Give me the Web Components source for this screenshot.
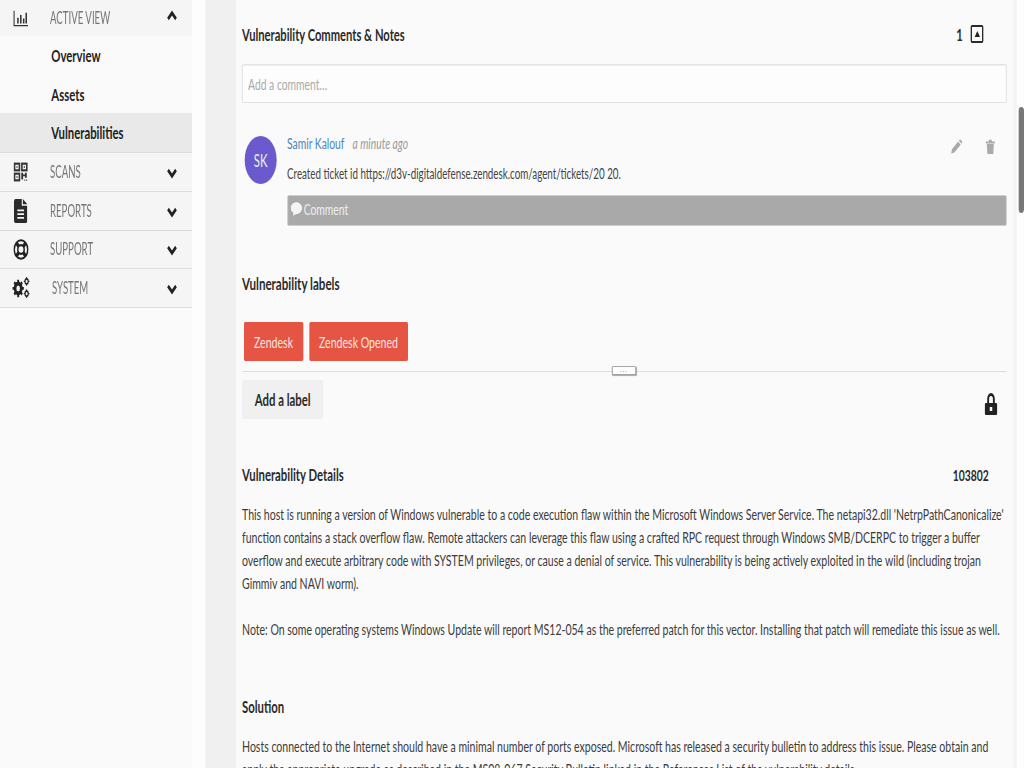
<!DOCTYPE html>
<html>
<head>
<meta charset="utf-8">
<title>Vulnerability</title>
<style>
  html, body { margin: 0; height: 768px; overflow: hidden; background: #fdfdfd; }
  body { font-family: Lato, "Open Sans", sans-serif; color: #333; }
</style>
</head>
<body>
<app-shell>
  <side-nav slot="nav">
    <nav-row icon="chart" open style="height:36px">ACTIVE VIEW</nav-row>
    <sub-row>Overview</sub-row>
    <sub-row>Assets</sub-row>
    <sub-row active>Vulnerabilities</sub-row>
    <nav-row icon="qr">SCANS</nav-row>
    <nav-row icon="file">REPORTS</nav-row>
    <nav-row icon="help">SUPPORT</nav-row>
    <nav-row icon="cogs" shift>SYSTEM</nav-row>
  </side-nav>

  <comment-box></comment-box>

  <comment-item initials="SK" author="Samir Kalouf" when="a minute ago">
    Created ticket id https://d3v-digitaldefense.zendesk.com/agent/tickets/20 20.
  </comment-item>

  <label-box></label-box>

  <detail-block title-text="Vulnerability Details" code="103802">
    <p>This host is running a version of Windows vulnerable to a code execution flaw within the Microsoft Windows Server Service. The netapi32.dll 'NetrpPathCanonicalize'<br>function contains a stack overflow flaw. Remote attackers can leverage this flaw using a crafted RPC request through Windows SMB/DCERPC to trigger a buffer<br>overflow and execute arbitrary code with SYSTEM privileges, or cause a denial of service. This vulnerability is being actively exploited in the wild (including trojan<br>Gimmiv and NAVI worm).<br><br>Note: On some operating systems Windows Update will report MS12-054 as the preferred patch for this vector. Installing that patch will remediate this issue as well.</p>
  </detail-block>

  <detail-block title-text="Solution" style="margin-top:57px">
    <p>Hosts connected to the Internet should have a minimal number of ports exposed. Microsoft has released a security bulletin to address this issue. Please obtain and<br>apply the appropriate upgrade as described in the MS08-067 Security Bulletin linked in the References List of the vulnerability details.</p>
  </detail-block>
</app-shell>

<script>
// the reference is squeezed horizontally, so everything is laid out at 1536 wide and scaled to 1024
const ICONS = {
  chart: `<svg viewBox="0 0 24 24" width="23" height="17" preserveAspectRatio="none"><path d="M1 1v21h22" fill="none" stroke="#333" stroke-width="2"/><path d="M6 11h2.400v8H6zM10.500 7h2.400v12h-2.400zM15 12h2.400v7H15zM19 4h2.400v15H19z" fill="#333"/></svg>`,
  qr: `<svg viewBox="0 0 24 24" width="22" height="20" preserveAspectRatio="none"><g fill="none" stroke="#333" stroke-width="2.600"><rect x="2" y="2" width="8" height="8"/><rect x="14" y="2" width="8" height="8"/><rect x="2" y="14" width="8" height="8"/></g><path d="M5 5h2v2H5zM17 5h2v2h-2zM5 17h2v2H5z" fill="#333"/><path d="M13 13h3v2h3v-2h3v6h-3v-2h-3v4h-3zM18 21h1.600v1.600H18zM21 21h1.600v1.600H21z" fill="#333"/></svg>`,
  file: `<svg viewBox="0 0 24 32" width="20" height="24" preserveAspectRatio="none"><path d="M3 0h11v9h10v20a3 3 0 0 1-3 3H3a3 3 0 0 1-3-3V3a3 3 0 0 1 3-3zM16 0l8 7h-8z" fill="#2b2b2b"/><path d="M6 14h12v2.400H6zM6 19h12v2.400H6zM6 24h12v2.400H6z" fill="#f5f5f5"/></svg>`,
  help: `<svg viewBox="0 0 24 24" width="23" height="21" preserveAspectRatio="none"><circle cx="12" cy="12" r="10.600" fill="none" stroke="#222" stroke-width="2.400"/><circle cx="12" cy="12" r="5" fill="none" stroke="#222" stroke-width="2.400"/><path d="M4.500 4.500l4 4M19.500 4.500l-4 4M4.500 19.500l4-4M19.500 19.500l-4-4" stroke="#222" stroke-width="4.600"/></svg>`,
  cogs: `<svg viewBox="0 0 32 24" width="27" height="21" preserveAspectRatio="none"><g fill="none" stroke="#222"><circle cx="11" cy="13" r="5.500" stroke-width="4.600"/><path d="M11 3v4M11 19v4M1 13h4M17 13h4M4 6l3 3M18 6l-3 3M4 20l3-3M18 20l-3-3" stroke-width="3.400"/><circle cx="26" cy="5" r="2.800" stroke-width="2"/><path d="M26 0v2M26 8v2M21 5h2M29 5h2" stroke-width="1.600"/><circle cx="26" cy="19" r="2.800" stroke-width="2"/><path d="M26 14v2M26 22v2M21 19h2M29 19h2" stroke-width="1.600"/></g></svg>`
};

class AppShell extends HTMLElement {
  constructor() {
    super();
    this.attachShadow({ mode: 'open' }).innerHTML = `
      <style>
        :host {
          display: grid;
          grid-template-columns: 288px 20px 46px 1fr;
          width: 1536px;
          height: 768px;
          overflow: hidden;
          transform: scaleX(.66667);
          transform-origin: 0 0;
          position: relative;
          filter: blur(.35px);
        }
        .gutter { background: #f0f0f0; }
        .content { background: #fafafa; padding: 0 10.500px 0 9px; border-right: 5px solid #f3f3f3; margin-right: 11px; overflow: hidden; min-width: 0; }
        .thumb { position: absolute; right: 0; top: 107px; width: 8px; height: 106px; border-radius: 4px; background: #777; }
      </style>
      <slot name="nav"></slot>
      <div></div>
      <div class="gutter"></div>
      <div class="content"><slot></slot></div>
      <div class="thumb"></div>`;
  }
}

class SideNav extends HTMLElement {
  constructor() {
    super();
    this.attachShadow({ mode: 'open' }).innerHTML = `
      <style>:host { display: flex; flex-direction: column; background: #fafafa; }</style><slot></slot>`;
  }
}

class NavRow extends HTMLElement {
  constructor() {
    super();
    const open = this.hasAttribute('open');
    const chev = open ? 'M3 11l6-6 6 6' : 'M3 5l6 6 6-6';
    this.attachShadow({ mode: 'open' }).innerHTML = `
      <style>
        :host { display: flex; align-items: center; box-sizing: border-box; height: 38.600px; background: #f5f5f5; border-bottom: 1.500px solid #ddd; flex: none; }
        :host([open]) { border-bottom: 0; }
        .ico { width: 62px; display: flex; justify-content: center; flex: none; }
        .txt { flex: 1; font-size: 17px; color: #757575; padding-left: 13px; margin-top: -1px; }
        .txt span { display: inline-block; transform: scaleX(.85); transform-origin: 0 50%; white-space: nowrap; }
        .chev { margin-right: 20.500px; display: flex; position: relative; top: ${open ? '-2px' : '1px'}; }
      </style>
      <div class="ico">${ICONS[this.getAttribute('icon')]}</div>
      <div class="txt" style="${this.hasAttribute('shift') ? 'padding-left:16px' : ''}"><span><slot></slot></span></div>
      <div class="chev"><svg width="20" height="16" viewBox="0 0 18 16"><path d="${chev}" fill="none" stroke="#222" stroke-width="3.500"/></svg></div>`;
  }
}

class SubRow extends HTMLElement {
  constructor() {
    super();
    this.attachShadow({ mode: 'open' }).innerHTML = `
      <style>
        :host { display: flex; align-items: center; height: 38.700px; padding-left: 77px; font-size: 17px; font-weight: 700; color: #222; flex: none; }
        :host([active]) { background: #e9e9e9; border-radius: 2px 2px 0 0; border-bottom: 1.500px solid #ddd; height: 39px; }
      </style><slot></slot>`;
  }
}

class CommentBox extends HTMLElement {
  constructor() {
    super();
    this.attachShadow({ mode: 'open' }).innerHTML = `
      <style>
        :host { display: block; padding-top: 24px; }
        .head { display: flex; align-items: center; justify-content: space-between; height: 20px; font-size: 16.800px; font-weight: 700; color: #2b2b2b; }
        .count { display: flex; align-items: center; gap: 12px; margin-right: 34.500px; }
        .up { box-sizing: border-box; width: 19px; height: 18px; border: 2px solid #2b2b2b; border-radius: 2px; display: flex; align-items: center; justify-content: center; }
        .up i { width: 0; height: 0; border: 4.500px solid transparent; border-bottom: 6px solid #222; border-top: 0; }
        .input { box-sizing: border-box; margin-top: 20px; height: 39px; border: 1.500px solid #ddd; border-radius: 2px; background: #fdfdfd; display: flex; align-items: center; padding-left: 8px; font-size: 15.500px; color: #aaa; box-shadow: inset 0 1px 1px #eee; }
      </style>
      <div class="head"><span>Vulnerability Comments &amp; Notes</span><span class="count">1 <span class="up"><i></i></span></span></div>
      <div class="input">Add a comment&hellip;</div>`;
  }
}

class CommentItem extends HTMLElement {
  constructor() {
    super();
    this.attachShadow({ mode: 'open' }).innerHTML = `
      <style>
        :host { display: grid; grid-template-columns: 63.500px 1fr; padding: 33px 0 0 4px; font-size: 15.500px; }
        .avatar { width: 48px; height: 48px; border-radius: 50%; background: #6a5acd; color: #eee; display: flex; align-items: center; justify-content: center; font-size: 17px; }
        .top { display: flex; align-items: center; height: 13px; gap: 12px; }
        .name { color: #4a86bd; }
        .when { color: #999; font-style: italic; }
        .tools { margin-left: auto; display: flex; gap: 34px; margin-right: 16.500px; margin-top: 7px; }
        .msg { margin-top: 14px; height: 21px; line-height: 21px; font-size: 14.700px; color: #444; white-space: nowrap; }
        .bar { box-sizing: border-box; margin-top: 11px; height: 30.500px; background: #a9a9a9; border-radius: 2px; border: 1px solid #ccc; display: flex; align-items: center; gap: 3px; padding: 0 0 2px 4px; color: #eee; }
      </style>
      <div class="avatar">${this.getAttribute('initials')}</div>
      <div>
        <div class="top">
          <span class="name">${this.getAttribute('author')}</span>
          <span class="when">${this.getAttribute('when')}</span>
          <span class="tools">
            <svg width="18" height="15" viewBox="0 0 24 24" preserveAspectRatio="none"><path d="M1 23l1.500-6.500L15 4l5 5L7.500 21.500z M16.500 2.500l1.500-1.500q1-1 2 0l3 3q1 1 0 2L21.500 7.500z" fill="#aaa"/></svg>
            <svg width="15" height="15" viewBox="0 0 20 24" preserveAspectRatio="none"><path d="M1 4h18v3H1zM7 1h6v3H7zM3 8h14l-1 16H4z" fill="#aaa"/></svg>
          </span>
        </div>
        <div class="msg"><slot></slot></div>
        <div class="bar"><svg width="17" height="14" viewBox="0 0 20 16"><path d="M10 0c5.500 0 10 3 10 7s-4.500 7-10 7l-6 2 1-3.500C2 11 0 9 0 7c0-4 4.500-7 10-7z" fill="#f5f5f5"/></svg>Comment</div>
      </div>`;
  }
}

class LabelChip extends HTMLElement {
  constructor() {
    super();
    this.attachShadow({ mode: 'open' }).innerHTML = `
      <style>
        :host { display: flex; align-items: center; justify-content: center; box-sizing: border-box; height: 39px; padding: 0 15px; background: #e65443; color: #f6e5e2; border-radius: 2px; font-size: 15.850px; }
      </style><slot></slot>`;
  }
}
customElements.define('label-chip', LabelChip);

class LabelBox extends HTMLElement {
  constructor() {
    super();
    this.attachShadow({ mode: 'open' }).innerHTML = `
      <style>
        :host { display: block; padding-top: 48px; position: relative; }
        h3 { margin: 0; height: 20px; line-height: 20px; font-size: 17.400px; color: #2b2b2b; }
        .chips { display: flex; gap: 9px; padding: 28px 0 0 3px; }
        .rule { margin-top: 10px; border-top: 1.500px solid #ddd; position: relative; height: 8px; }
        .handle { position: absolute; left: 555px; top: -6px; width: 36px; height: 9px; box-sizing: border-box; border: 1.500px solid #999; background: #fdfdfd; box-shadow: 0 1px 1px #aaa; border-radius: 1px; font-size: 8px; line-height: 4px; text-align: center; color: #666; letter-spacing: 2px; }
        .foot { display: flex; justify-content: space-between; align-items: center; }
        .add { display: flex; align-items: center; justify-content: center; width: 122px; height: 39px; background: #f0f0f0; border-radius: 2px; font-size: 17px; font-weight: 700; color: #2b2b2b; }
        .lock { margin-right: 14px; margin-top: 10px; display: flex; }
      </style>
      <h3>Vulnerability labels</h3>
      <div class="chips"><label-chip>Zendesk</label-chip><label-chip>Zendesk Opened</label-chip></div>
      <div class="rule"><div class="handle">...</div></div>
      <div class="foot">
        <div class="add">Add a label</div>
        <div class="lock"><svg width="19" height="22" viewBox="0 0 20 22" preserveAspectRatio="none"><path d="M4 10V6a6 6 0 0 1 12 0v4h2a2 2 0 0 1 2 2v8a2 2 0 0 1-2 2H2a2 2 0 0 1-2-2v-8a2 2 0 0 1 2-2zM7 10h6V6a3 3 0 0 0-6 0zM8 14v4h4v-4z" fill="#222" fill-rule="evenodd"/></svg></div>
      </div>`;
  }
}

class DetailBlock extends HTMLElement {
  constructor() {
    super();
    const code = this.getAttribute('code');
    this.attachShadow({ mode: 'open' }).innerHTML = `
      <style>
        :host { display: block; }
        :host(:not([style])) { padding-top: 46px; }
        .head { display: flex; justify-content: space-between; height: 20px; line-height: 20px; font-size: 17px; font-weight: 700; color: #2b2b2b; }
        .code { margin-right: 26.500px; font-size: 15.500px; }
        .body { margin-top: 17px; font-size: 15.800px; line-height: 23px; color: #3c3c3c; white-space: nowrap; }
        ::slotted(p) { margin: 0; }
      </style>
      <div class="head"><span>${this.getAttribute('title-text')}</span><span class="code">${code || ''}</span></div>
      <div class="body"><slot></slot></div>`;
  }
}

customElements.define('app-shell', AppShell);
customElements.define('side-nav', SideNav);
customElements.define('nav-row', NavRow);
customElements.define('sub-row', SubRow);
customElements.define('comment-box', CommentBox);
customElements.define('comment-item', CommentItem);
customElements.define('label-box', LabelBox);
customElements.define('detail-block', DetailBlock);
</script>
</body>
</html>
